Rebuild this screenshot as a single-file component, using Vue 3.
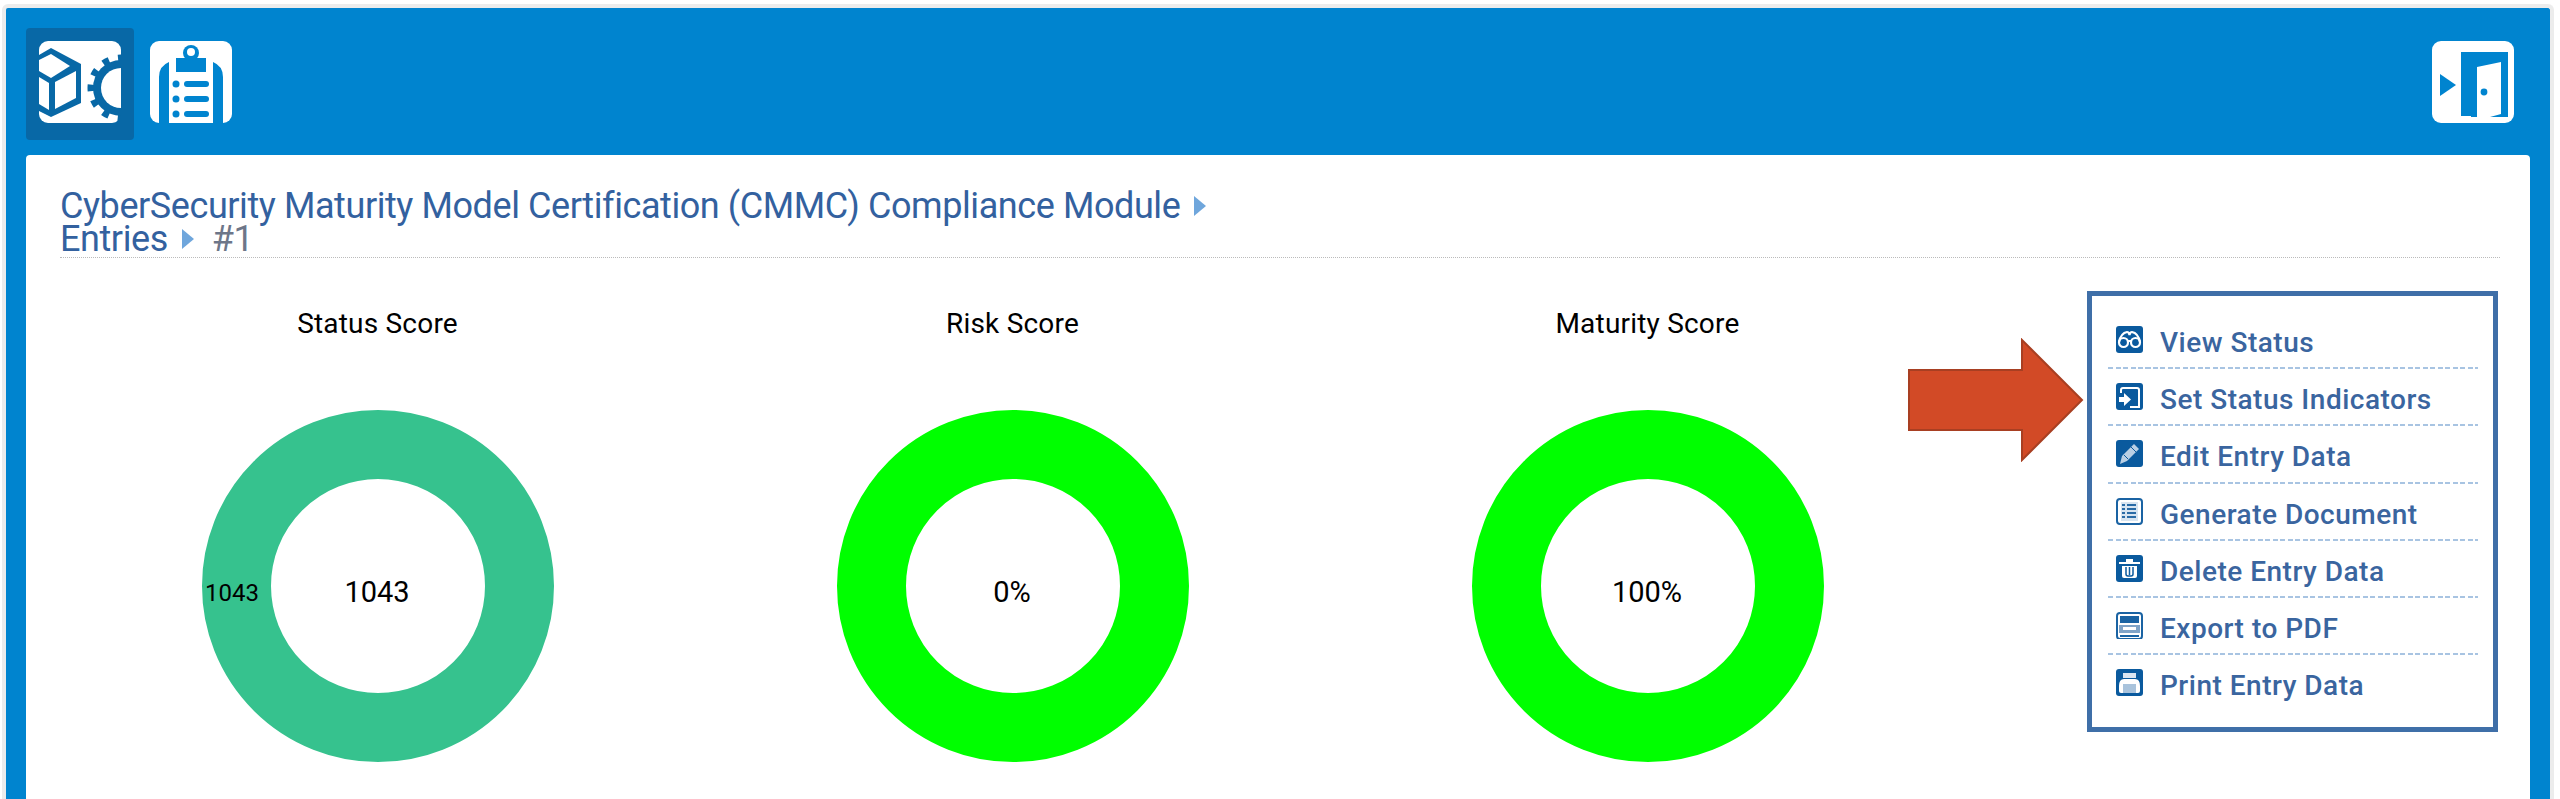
<script setup>
const charts = [
  { title: 'Status Score', color: '#36c28e', value: '1043', side: '1043' },
  { title: 'Risk Score', color: '#00ff00', value: '0%' },
  { title: 'Maturity Score', color: '#00ff00', value: '100%' },
]
const items = [
  { label: 'View Status', icon: 'view' },
  { label: 'Set Status Indicators', icon: 'set' },
  { label: 'Edit Entry Data', icon: 'edit' },
  { label: 'Generate Document', icon: 'doc' },
  { label: 'Delete Entry Data', icon: 'del' },
  { label: 'Export to PDF', icon: 'pdf' },
  { label: 'Print Entry Data', icon: 'print' },
]
</script>

<template>
  <div class="page">
    <div class="shell">
      <header class="bar">
        <div class="tools">
          <div class="tile active">
            <svg class="big" viewBox="0 0 82 82">
              <rect width="82" height="82" rx="9" fill="#fff" />
              <path d="M0 14 L12 7 L42 23 V62 L12 76 L0 70Z" fill="#0868a6" />
              <path d="M0 19 L12 13 L31 25 L12 37 L0 30Z" fill="#fff" />
              <path d="M0 36 L10 42 V69 L0 63Z" fill="#fff" />
              <path d="M16 41 L37 30 V57 L16 68Z" fill="#fff" />
              <circle cx="82" cy="47" r="30" fill="none" stroke="#0868a6" stroke-width="7" stroke-dasharray="6.500 9.208" stroke-dashoffset="3.250" />
              <circle cx="82" cy="47" r="28" fill="#0868a6" />
              <circle cx="82" cy="47" r="20" fill="#fff" />
            </svg>
          </div>
          <div class="tile">
            <svg class="big" viewBox="0 0 82 82">
              <rect width="82" height="82" rx="9" fill="#fff" />
              <path d="M9 82 V36 Q9 25 19 21 V82Z M73 82 V36 Q73 25 63 21 V82Z" fill="#0084cf" />
              <rect x="26" y="17" width="30" height="14" fill="#0084cf" />
              <circle cx="41" cy="12" r="8" fill="#0084cf" />
              <circle cx="41" cy="11" r="4" fill="#fff" />
              <circle cx="26" cy="43" r="3.500" fill="#0084cf" /><rect x="34" y="40" width="25" height="6" rx="3" fill="#0084cf" />
              <circle cx="26" cy="58" r="3.500" fill="#0084cf" /><rect x="34" y="55" width="25" height="6" rx="3" fill="#0084cf" />
              <circle cx="26" cy="73" r="3.500" fill="#0084cf" /><rect x="34" y="70" width="25" height="6" rx="3" fill="#0084cf" />
            </svg>
          </div>
        </div>
        <svg class="big door" viewBox="0 0 82 82">
          <rect width="82" height="82" rx="9" fill="#fff" />
          <path d="M29 11 H76 V76 H58 L69 73 V21 L45 26 V76 H39 V75 H29Z" fill="#0084cf" />
          <path d="M8 33 L24 44 L8 55Z" fill="#0084cf" />
          <circle cx="52" cy="51" r="3.400" fill="#0084cf" />
        </svg>
      </header>

      <main class="card">
        <h1 class="crumbs">
          <span>CyberSecurity Maturity Model Certification (CMMC) Compliance Module</span><i class="tri"></i>
          <br />
          <span>Entries</span><i class="tri"></i><span class="here">#1</span>
        </h1>

        <div class="body">
          <section v-for="c in charts" :key="c.title" class="chart">
            <h2>{{ c.title }}</h2>
            <svg class="ring" viewBox="0 0 352 352">
              <circle cx="176" cy="176" r="141.500" fill="none" :stroke="c.color" stroke-width="69" />
              <text x="175" y="192" class="mid">{{ c.value }}</text>
              <text v-if="c.side" x="30" y="191" class="side">{{ c.side }}</text>
            </svg>
          </section>

          <nav class="menu">
            <svg class="arrow" viewBox="0 0 176 124">
              <path d="M1 32 H114 V2 L174 62 L114 122 V92 H1Z" fill="#d24a26" stroke="#a83f22" stroke-width="2" />
            </svg>
            <a v-for="it in items" :key="it.label" class="item">
              <svg class="ico" viewBox="0 0 27 27">
                <template v-if="it.icon === 'view'">
                  <rect width="27" height="27" rx="3" fill="#0a5a9e" />
                  <g fill="none" stroke="#fff" stroke-width="2.200">
                    <circle cx="7.500" cy="16.500" r="4.500" /><circle cx="19.500" cy="16.500" r="4.500" />
                    <path d="M12 15h3M3 16Q5 7 11 6q2 0 2.500 3 .5-3 2.500-3 6 1 8 10" />
                  </g>
                </template>
                <template v-else-if="it.icon === 'set'">
                  <rect width="27" height="27" rx="3" fill="#0a5a9e" />
                  <path d="M5 10V7a2 2 0 0 1 2-2h14a2 2 0 0 1 2 2v17h-9" fill="none" stroke="#fff" stroke-width="2" />
                  <path d="M3 14h5v-4l7 6.500-7 6.500v-4H3z" fill="#fff" />
                </template>
                <template v-else-if="it.icon === 'edit'">
                  <rect width="27" height="27" rx="3" fill="#0a5a9e" />
                  <path d="M4 24l2-8L18 4l5 5L11 21z" fill="#b9cfe4" />
                  <path d="M8 15l4 4M15 7l5 5" stroke="#0a5a9e" stroke-width="1" />
                </template>
                <template v-else-if="it.icon === 'doc'">
                  <rect x="1" y="1" width="25" height="25" rx="3" fill="#fff" stroke="#1a63a3" stroke-width="2" />
                  <rect x="5" y="4" width="17" height="19" fill="#d7e4f0" />
                  <path d="M11 7h9M11 11h9M11 15h9M11 19h9M6 7h3M6 11h3M6 15h3M6 19h3" stroke="#2a6ba6" stroke-width="2" />
                </template>
                <template v-else-if="it.icon === 'del'">
                  <rect width="27" height="27" rx="3" fill="#0a5a9e" />
                  <path d="M3 7h21v2H3zM10 4h7v3h-7z" fill="#fff" />
                  <path d="M6 11h15v10a2 2 0 0 1-2 2H8a2 2 0 0 1-2-2z" fill="#fff" />
                  <path d="M10 12v7q0 2 2 2h3q2 0 2-2v-7M13.500 12v8" fill="none" stroke="#0a5a9e" stroke-width="1.500" />
                </template>
                <template v-else-if="it.icon === 'pdf'">
                  <rect x="1" y="1" width="25" height="26" rx="3" fill="#fff" stroke="#1a63a3" stroke-width="2" />
                  <rect x="4" y="4" width="19" height="7" fill="#1a63a3" />
                  <rect x="3" y="13" width="21" height="8" fill="#7fa3c7" />
                  <rect x="7" y="15" width="13" height="3" fill="#fff" />
                  <rect x="4" y="23" width="19" height="2" fill="#1a63a3" />
                </template>
                <template v-else>
                  <rect width="27" height="27" rx="3" fill="#0a5a9e" />
                  <path d="M7 4h13v5H7z" fill="#dbe6f1" />
                  <path d="M3 17q0-7 5-7h11q5 0 5 7v5q0 2-2 2H5q-2 0-2-2z" fill="#fff" />
                  <rect x="7" y="15" width="13" height="9" fill="#a9c3dc" />
                </template>
              </svg>
              <span class="label">{{ it.label }}</span>
            </a>
          </nav>
        </div>
      </main>
    </div>
  </div>
</template>

<style>
html, body { margin: 0; background: #fff; overflow: hidden; }
</style>

<style scoped>
.page {
  height: 799px;
  overflow: hidden;
  box-sizing: border-box;
  padding: 4px 6px 0 2px;
  font-family: Roboto, "Noto Sans", sans-serif;
}
.shell {
  height: 795px;
  box-sizing: border-box;
  background: #0084cf;
  border: solid #ececec;
  border-width: 4px 4px 0 4px;
  border-radius: 6px 6px 0 0;
  padding: 20px 20px 0;
  display: flex;
  flex-direction: column;
  gap: 15px;
}
.bar {
  height: 112px;
  display: flex;
  justify-content: space-between;
  align-items: flex-start;
  padding-right: 16px;
}
.tools { display: flex; align-items: flex-start; }
.tile {
  height: 112px;
  width: 108px;
  box-sizing: border-box;
  padding-top: 13px;
  display: flex;
  align-items: flex-start;
  justify-content: center;
  border-radius: 4px;
}
.tile + .tile { width: 82px; margin-left: 16px; }
.tile.active { background: #0868a6; }
.big { width: 82px; height: 82px; display: block; flex: none; }
.door { margin-top: 13px; }
.card {
  flex: 1;
  background: #fff;
  border-radius: 4px 4px 0 0;
  padding: 35px 30px 0 34px;
}
.crumbs {
  margin: 0;
  width: 2440px;
  height: 67px;
  border-bottom: 1px dotted #bbb;
  font-size: 36px;
  line-height: 33px;
  font-weight: 400;
  letter-spacing: -0.42px;
  color: #33619f;
  white-space: nowrap;
}
.here { color: #6d7689; }
.tri {
  display: inline-block;
  width: 0;
  height: 0;
  margin: 0 18px 0 14px;
  border-left: 12px solid #6fa6dc;
  border-top: 10px solid transparent;
  border-bottom: 10px solid transparent;
  vertical-align: 2px;
}
.body {
  display: flex;
  align-items: flex-start;
  padding-top: 33px;
}
.chart {
  flex: none;
  width: 635px;
  display: flex;
  flex-direction: column;
  align-items: center;
}
.chart h2 {
  margin: 14px 0 0;
  font-size: 28px;
  line-height: 37px;
  font-weight: 400;
  letter-spacing: 0.2px;
  color: #000;
}
.ring { width: 352px; height: 352px; margin-top: 68px; display: block; }
.mid { font-size: 29px; text-anchor: middle; fill: #000; }
.side { font-size: 24px; text-anchor: middle; fill: #000; }
.menu {
  position: relative;
  flex: none;
  margin-left: 122px;
  width: 411px;
  height: 441px;
  box-sizing: border-box;
  border: 5px solid #3f6fa8;
  padding: 16px 15px 0 16px;
  display: flex;
  flex-direction: column;
}
.arrow {
  position: absolute;
  left: -184px;
  top: 42px;
  width: 176px;
  height: 124px;
  display: block;
}
.item {
  height: 57.200px;
  flex: none;
  box-sizing: border-box;
  padding: 14px 0 0 8px;
  display: flex;
  align-items: flex-start;
  gap: 17px;
  color: #3a659f;
  font-size: 28px;
  line-height: 32px;
  font-weight: 500;
  letter-spacing: 0.5px;
  white-space: nowrap;
  background: repeating-linear-gradient(90deg, #a8c4e2 0 5px, transparent 5px 7.500px) left bottom / 100% 2px no-repeat;
}
.item:last-child { background: none; }
.label { margin-top: 1px; }
.ico { width: 27px; height: 27px; flex: none; display: block; }
</style>
